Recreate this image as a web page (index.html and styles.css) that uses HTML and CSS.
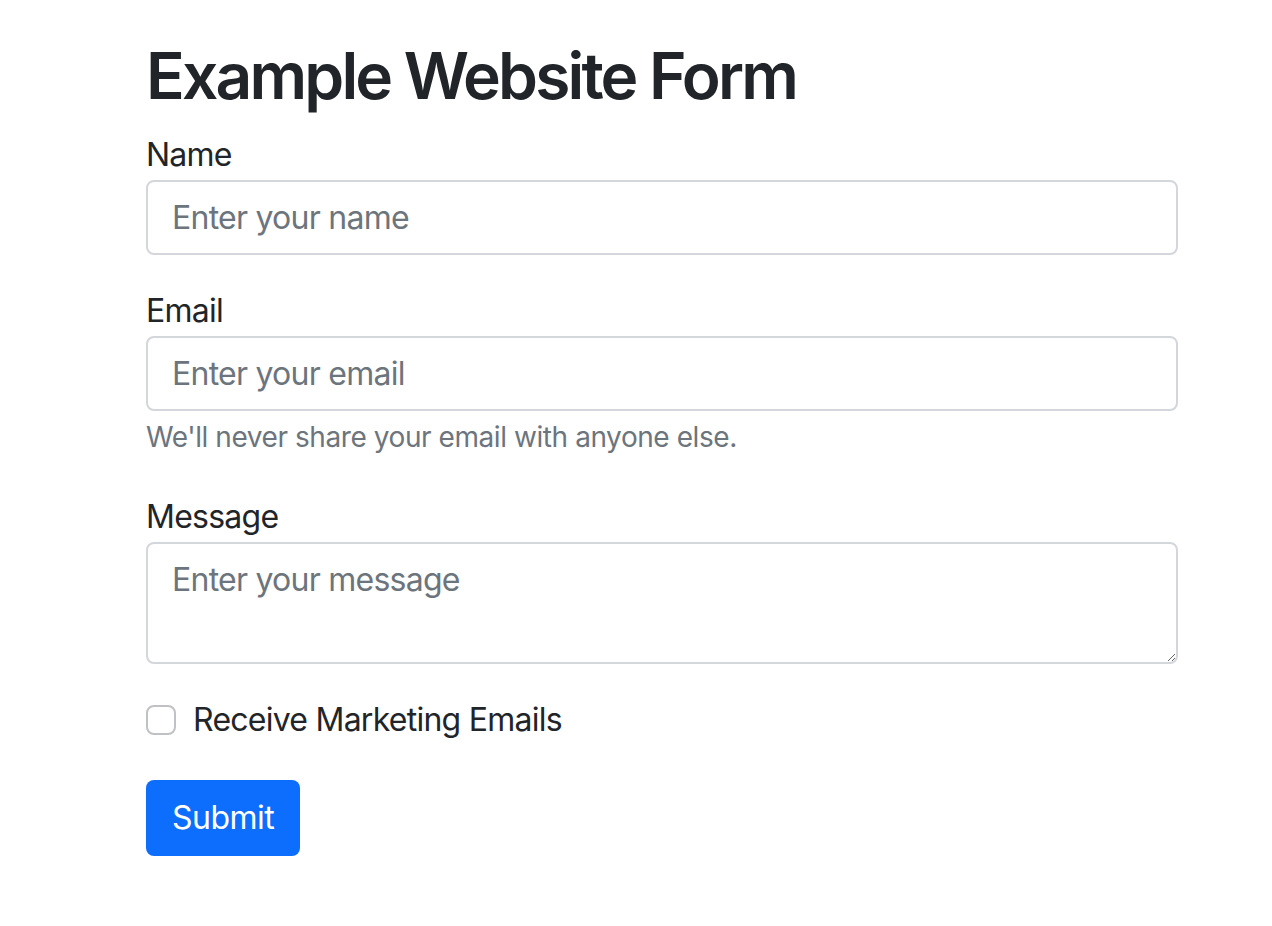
FILE: index.html
```html
<!DOCTYPE html>
<html lang="en">
<head>
<meta charset="utf-8">
<title>Example Website Form</title>
<link rel="stylesheet" href="styles.css">
</head>
<body>
<main class="container">
  <h1 class="title">Example Website Form</h1>
  <form class="form">
    <div class="field">
      <label class="label" for="name">Name</label>
      <input class="control" type="text" id="name" placeholder="Enter your name">
    </div>
    <div class="field field-help">
      <label class="label" for="email">Email</label>
      <input class="control" type="email" id="email" placeholder="Enter your email">
      <div class="help">We'll never share your email with anyone else.</div>
    </div>
    <div class="field">
      <label class="label" for="message">Message</label>
      <textarea class="control textarea" id="message" placeholder="Enter your message"></textarea>
    </div>
    <div class="field check">
      <input class="check-input" type="checkbox" id="marketing">
      <label class="check-label" for="marketing">Receive Marketing Emails</label>
    </div>
    <button class="btn" type="submit">Submit</button>
  </form>
</main>
</body>
</html>
```
FILE: styles.css
```css
html, body {
  margin: 0;
  padding: 0;
  background: #fff;
}
body {
  font-family: "Inter", "Liberation Sans", sans-serif;
  color: #212529;
  font-size: 32px;
  line-height: 1.5;
  letter-spacing: -0.75px;
}
.container {
  width: 1032px;
  margin-left: 146px;
  padding-top: 38px;
}
.title {
  margin: 0 0 16px;
  font-size: 64px;
  font-weight: 600;
  line-height: 1.2;
  letter-spacing: -2.8px;
}
.form {
  display: flex;
  flex-direction: column;
}
.field {
  margin-bottom: 32px;
}
.field-help {
  margin-bottom: 35px;
}
.label {
  display: block;
  margin-bottom: 1px;
}
.control {
  display: block;
  box-sizing: border-box;
  width: 100%;
  height: 75px;
  padding: 12px 24px;
  font-family: inherit;
  font-size: 32px;
  line-height: 1.5;
  letter-spacing: -0.75px;
  color: #212529;
  background: #fff;
  border: 2px solid #d3d6da;
  border-radius: 8px;
  outline: none;
}
.control::placeholder {
  color: #6c757d;
}
.textarea {
  height: 122px;
  resize: vertical;
}
.help {
  margin-top: 5px;
  font-size: 28px;
  letter-spacing: -0.43px;
  color: #6c757d;
}
.check {
  display: flex;
  align-items: center;
  gap: 17px;
  margin-bottom: 36px;
}
.check-input {
  appearance: none;
  -webkit-appearance: none;
  margin: 0;
  width: 30px;
  height: 30px;
  box-sizing: border-box;
  border: 2px solid #bfc1c4;
  border-radius: 8px;
  background: #fff;
}
.btn {
  align-self: flex-start;
  box-sizing: border-box;
  height: 76px;
  padding: 0 26px;
  font-family: inherit;
  font-size: 32px;
  letter-spacing: -0.5px;
  color: #fff;
  background: #0d6efd;
  border: none;
  border-radius: 8px;
  cursor: pointer;
}
```
